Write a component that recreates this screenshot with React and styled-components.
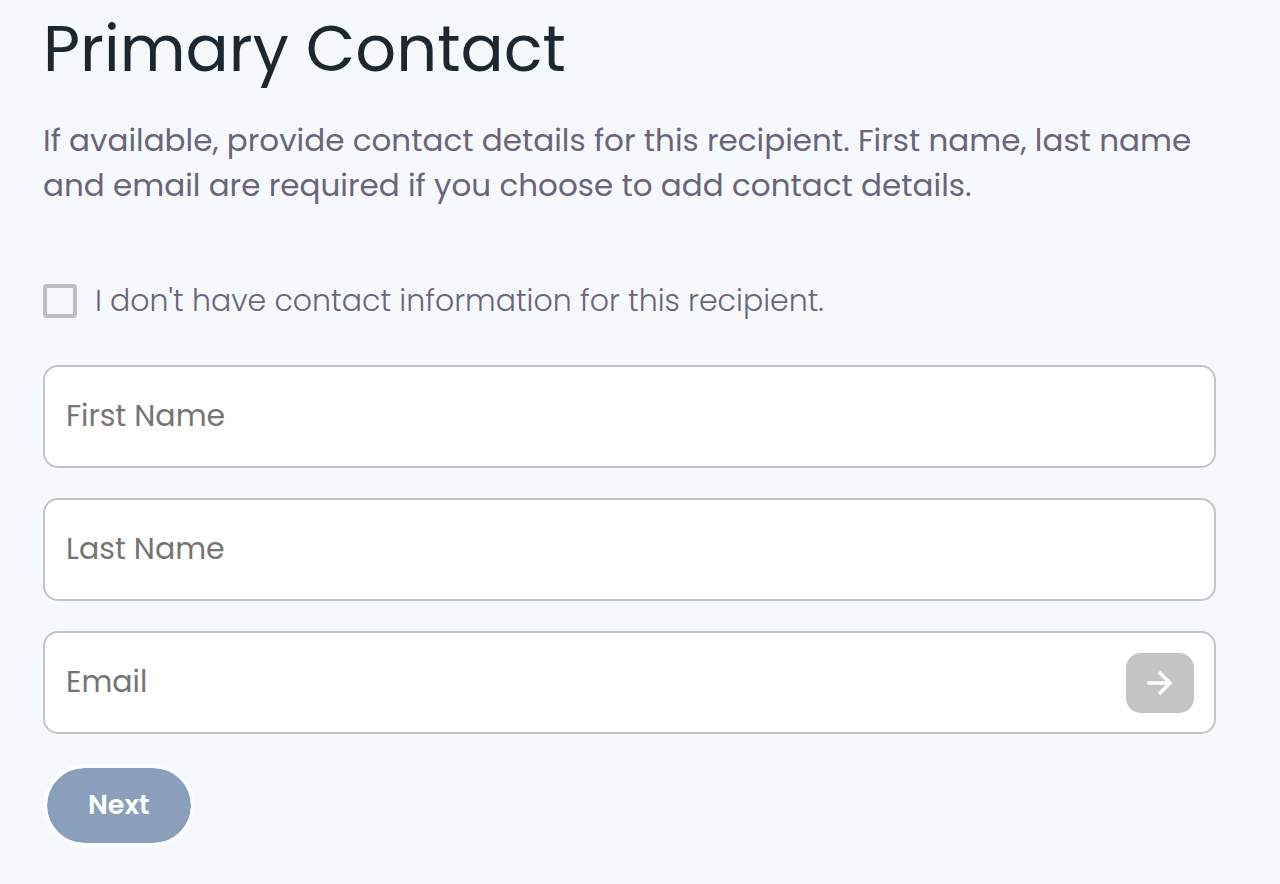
import React, { useState } from "react";
import styled, { createGlobalStyle } from "styled-components";

const GlobalStyle = createGlobalStyle`
  *, *::before, *::after { box-sizing: border-box; }
  body {
    margin: 0;
    background: #f5f9fc;
    font-family: Poppins, Inter, "Open Sans", sans-serif;
    color: #6b647a;
  }
`;

const Form = styled.form`
  display: flex;
  flex-direction: column;
  align-items: stretch;
  padding: 0 64px 36px 43px;
`;

const Title = styled.h1`
  margin: 0;
  padding-top: 5px;
  font-size: 64px;
  line-height: 88px;
  font-weight: 400;
  color: #1c2730;
`;

const Intro = styled.p`
  margin: 25px 0 0;
  font-size: 31px;
  line-height: 45px;
  font-weight: 400;
`;

const CheckLabel = styled.label`
  display: flex;
  align-items: center;
  gap: 18px;
  margin: 70px 0 41px;
  font-size: 30px;
  line-height: 46px;
  font-weight: 300;
`;

const CheckBox = styled.input`
  appearance: none;
  flex: none;
  width: 34px;
  height: 34px;
  margin: 0;
  border: 4px solid #bebfc1;
  border-radius: 4px;
  background: ${(p) => (p.checked ? "#8a9fbb" : "transparent")};
`;

const Fields = styled.div`
  display: flex;
  flex-direction: column;
  gap: 30px;
`;

const Field = styled.div`
  display: flex;
  align-items: center;
  height: 103px;
  padding: 0 20px 0 21px;
  border: 2px solid #c4c4c4;
  border-radius: 15px;
  background: #fff;
`;

const TextInput = styled.input`
  flex: 1;
  min-width: 0;
  height: 60px;
  padding: 0 0 2px;
  border: 0;
  outline: 0;
  background: transparent;
  font: inherit;
  font-size: 30px;
  color: #1c2730;
  &::placeholder { color: #757575; opacity: 1; }
`;

const ArrowButton = styled.button`
  display: flex;
  align-items: center;
  justify-content: center;
  flex: none;
  width: 68px;
  height: 60px;
  padding: 0;
  border: 0;
  border-radius: 15px;
  background: #c4c4c4;
  color: #fff;
`;

const NextButton = styled.button`
  align-self: flex-start;
  height: 83px;
  margin-top: 30px;
  padding: 0 41px 2px;
  border: 4px solid #fbfdfe;
  border-radius: 42px;
  background: #8a9fbb;
  background-clip: padding-box;
  color: #fff;
  font: inherit;
  font-size: 27px;
  font-weight: 600;
`;

export default function App() {
  const [skip, setSkip] = useState(false);
  return (
    <>
      <GlobalStyle />
      <Form onSubmit={(e) => e.preventDefault()}>
        <Title>Primary Contact</Title>
        <Intro>
          If available, provide contact details for this recipient. First name, last name
          and email are required if you choose to add contact details.
        </Intro>
        <CheckLabel>
          <CheckBox type="checkbox" checked={skip} onChange={(e) => setSkip(e.target.checked)} />
          I don't have contact information for this recipient.
        </CheckLabel>
        <Fields>
          <Field>
            <TextInput type="text" aria-label="First Name" placeholder="First Name" />
          </Field>
          <Field>
            <TextInput type="text" aria-label="Last Name" placeholder="Last Name" />
          </Field>
          <Field>
            <TextInput type="email" aria-label="Email" placeholder="Email" />
            <ArrowButton type="button" aria-label="Continue">
              <svg width="26" height="26" viewBox="0 0 26 26" fill="none" stroke="currentColor" strokeWidth="3.4" aria-hidden="true">
                <path d="M0.5 13H23M12 2L23 13L12 24" />
              </svg>
            </ArrowButton>
          </Field>
        </Fields>
        <NextButton type="submit">Next</NextButton>
      </Form>
    </>
  );
}
